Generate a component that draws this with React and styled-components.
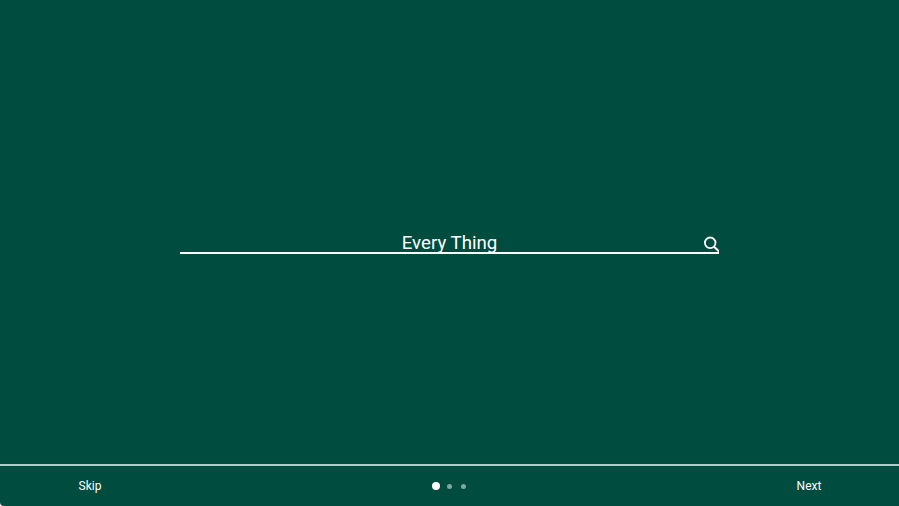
import React from "react";
import styled, { createGlobalStyle } from "styled-components";

const GlobalStyle = createGlobalStyle`
  html, body {
    margin: 0;
    height: 100%;
    background: #fff;
  }
  #root {
    height: 100%;
  }
`;

const Screen = styled.div`
  display: grid;
  grid-template-rows: 1fr 42px;
  width: 899px;
  height: 506px;
  overflow: hidden;
  background: #004d40;
  color: #fff;
  font-family: Roboto, "Liberation Sans", sans-serif;
  border-bottom-left-radius: 4px;
`;

const Main = styled.main`
  display: flex;
  justify-content: center;
  padding-top: 230px;
`;

const SearchBar = styled.div`
  display: grid;
  grid-template-columns: 24px 1fr 24px;
  align-items: start;
  box-sizing: border-box;
  width: 539px;
  height: 24px;
  border-bottom: 2px solid #fff;
`;

const SearchText = styled.span`
  grid-column: 2;
  font-size: 18.67px;
  line-height: 24px;
  text-align: center;
  margin-top: 1px;
`;

const SearchIcon = styled.svg`
  grid-column: 3;
  display: block;
  width: 16px;
  height: 16px;
  justify-self: end;
  margin-top: 6px;
`;

const Footer = styled.footer`
  display: grid;
  grid-template-columns: 180px 1fr 180px;
  align-items: center;
  border-top: 2px solid #b2cac5;
`;

const FooterButton = styled.span`
  font-size: 12px;
  line-height: 16px;
  text-align: center;
`;

const Dots = styled.div`
  display: flex;
  align-items: center;
  justify-content: center;
`;

const DotSlot = styled.span`
  display: flex;
  align-items: center;
  justify-content: center;
  width: 13.5px;
`;

const Dot = styled.span`
  display: block;
  width: ${props => (props.active ? "8px" : "5px")};
  height: ${props => (props.active ? "8px" : "5px")};
  border-radius: 50%;
  background: ${props => (props.active ? "#fff" : "rgba(255, 255, 255, 0.5)")};
`;

export default function App() {
  return (
    <>
      <GlobalStyle />
      <Screen>
        <Main>
          <SearchBar>
            <SearchText>Every Thing</SearchText>
            <SearchIcon viewBox="0 0 16 16" fill="none" stroke="#fff">
              <circle cx="7.2" cy="6.8" r="5.3" strokeWidth="1.8" />
              <path d="M11 10.8 L16 15.4" strokeWidth="2" />
            </SearchIcon>
          </SearchBar>
        </Main>
        <Footer>
          <FooterButton>Skip</FooterButton>
          <Dots>
            <DotSlot>
              <Dot active />
            </DotSlot>
            <DotSlot>
              <Dot />
            </DotSlot>
            <DotSlot>
              <Dot />
            </DotSlot>
          </Dots>
          <FooterButton>Next</FooterButton>
        </Footer>
      </Screen>
    </>
  );
}
